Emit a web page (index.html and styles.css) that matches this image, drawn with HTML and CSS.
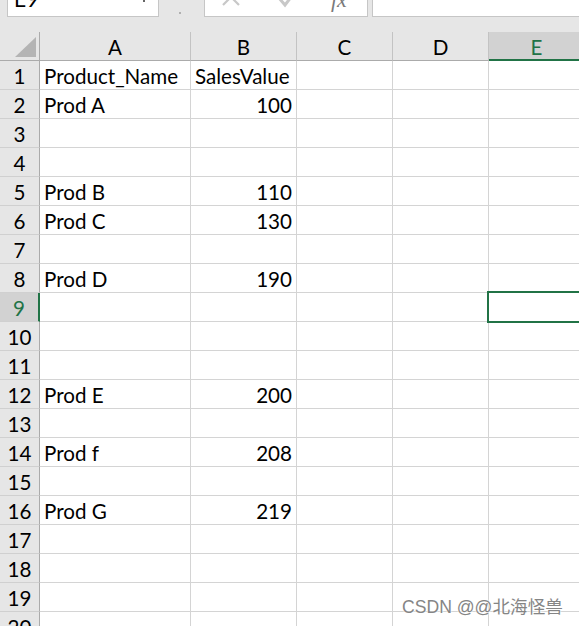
FILE: index.html
```html
<!DOCTYPE html>
<html>
<head>
<meta charset="utf-8">
<link rel="stylesheet" href="styles.css">
</head>
<body>
<div class="app">
  <div class="toolbar">
    <div class="namebox"><span class="nb-text">E9</span><span class="nb-arrow"></span></div>
    <div class="sep"><span class="dot"></span></div>
    <div class="fbuttons">
      <svg class="ico ico-x" width="20" height="20" viewBox="0 0 20 20"><path d="M2 2 L18 18 M18 2 L2 18" stroke="#c8c8c8" stroke-width="2.2" fill="none"/></svg>
      <svg class="ico ico-check" width="20" height="20" viewBox="0 0 20 20"><path d="M2 9 L8 16 L18 3" stroke="#c8c8c8" stroke-width="3" fill="none"/></svg>
      <span class="fx">fx</span>
    </div>
    <div class="finput"></div>
  </div>
  <div class="sheet">
    <div class="corner"><span class="tri"></span></div>
    <div class="ch">A</div>
    <div class="ch">B</div>
    <div class="ch">C</div>
    <div class="ch">D</div>
    <div class="ch ch-sel">E</div>

    <div class="rh">1</div><div class="c">Product_Name</div><div class="c">SalesValue</div><div class="c"></div><div class="c"></div><div class="c"></div>
    <div class="rh">2</div><div class="c">Prod A</div><div class="c num">100</div><div class="c"></div><div class="c"></div><div class="c"></div>
    <div class="rh">3</div><div class="c"></div><div class="c"></div><div class="c"></div><div class="c"></div><div class="c"></div>
    <div class="rh">4</div><div class="c"></div><div class="c"></div><div class="c"></div><div class="c"></div><div class="c"></div>
    <div class="rh">5</div><div class="c">Prod B</div><div class="c num">110</div><div class="c"></div><div class="c"></div><div class="c"></div>
    <div class="rh">6</div><div class="c">Prod C</div><div class="c num">130</div><div class="c"></div><div class="c"></div><div class="c"></div>
    <div class="rh">7</div><div class="c"></div><div class="c"></div><div class="c"></div><div class="c"></div><div class="c"></div>
    <div class="rh">8</div><div class="c">Prod D</div><div class="c num">190</div><div class="c"></div><div class="c"></div><div class="c"></div>
    <div class="rh rh-sel">9</div><div class="c"></div><div class="c"></div><div class="c"></div><div class="c"></div><div class="c active"><span class="selbox"></span></div>
    <div class="rh">10</div><div class="c"></div><div class="c"></div><div class="c"></div><div class="c"></div><div class="c"></div>
    <div class="rh">11</div><div class="c"></div><div class="c"></div><div class="c"></div><div class="c"></div><div class="c"></div>
    <div class="rh">12</div><div class="c">Prod E</div><div class="c num">200</div><div class="c"></div><div class="c"></div><div class="c"></div>
    <div class="rh">13</div><div class="c"></div><div class="c"></div><div class="c"></div><div class="c"></div><div class="c"></div>
    <div class="rh">14</div><div class="c">Prod f</div><div class="c num">208</div><div class="c"></div><div class="c"></div><div class="c"></div>
    <div class="rh">15</div><div class="c"></div><div class="c"></div><div class="c"></div><div class="c"></div><div class="c"></div>
    <div class="rh">16</div><div class="c">Prod G</div><div class="c num">219</div><div class="c"></div><div class="c"></div><div class="c"></div>
    <div class="rh">17</div><div class="c"></div><div class="c"></div><div class="c"></div><div class="c"></div><div class="c"></div>
    <div class="rh">18</div><div class="c"></div><div class="c"></div><div class="c"></div><div class="c"></div><div class="c"></div>
    <div class="rh">19</div><div class="c"></div><div class="c"></div><div class="c"></div><div class="c"></div><div class="c"></div>
    <div class="rh">20</div><div class="c"></div><div class="c"></div><div class="c"></div><div class="c"></div><div class="c"></div>
  </div>
  <div class="watermark">CSDN @@北海怪兽</div>
</div>
</body>
</html>
```
FILE: styles.css
```css
html, body {
  margin: 0;
  padding: 0;
  background: #ffffff;
  overflow: hidden;
}
.app {
  position: relative;
  width: 579px;
  height: 626px;
  overflow: hidden;
  font-family: Lato, "Open Sans", sans-serif;
  color: #000;
}
.toolbar {
  height: 32px;
  background: #e6e6e6;
  display: flex;
  align-items: flex-start;
}
.namebox {
  box-sizing: border-box;
  margin-left: 7px;
  margin-top: -10px;
  width: 152px;
  height: 27px;
  background: #fff;
  border: 1px solid #c6c6c6;
  position: relative;
  font-size: 21px;
  line-height: 20px;
}
.nb-text {
  position: absolute;
  left: 6px;
  top: -2px;
}
.nb-arrow {
  position: absolute;
  left: 135px;
  top: 9px;
  width: 2px;
  height: 2px;
  background: #666;
}
.sep {
  width: 45px;
  height: 16px;
  position: relative;
}
.dot {
  position: absolute;
  left: 20px;
  top: 12px;
  width: 2px;
  height: 2px;
  background: #b0b0b0;
}
.fbuttons {
  box-sizing: border-box;
  margin-top: -10px;
  width: 164px;
  height: 27px;
  background: #fff;
  border: 1px solid #c6c6c6;
  position: relative;
}
.ico {
  position: absolute;
}
.ico-x {
  left: 16px;
  top: -4px;
}
.ico-check {
  left: 72px;
  top: -2px;
}
.fx {
  position: absolute;
  left: 126px;
  top: -2px;
  font-family: "Liberation Serif", serif;
  font-style: italic;
  font-size: 22px;
  line-height: 22px;
  color: #7a7a7a;
}
.finput {
  box-sizing: border-box;
  margin-top: -10px;
  margin-left: 4px;
  flex: 1;
  height: 27px;
  background: #fff;
  border: 1px solid #c6c6c6;
  border-right: none;
}
.sheet {
  display: grid;
  grid-template-columns: 40px 151px 106px 96px 96px 96px;
  grid-template-rows: 29px;
  grid-auto-rows: 29px;
  font-size: 20.6px;
}
.corner, .ch, .rh, .c {
  box-sizing: border-box;
}
.corner {
  background: #e6e6e6;
  border-right: 1px solid #ababab;
  border-bottom: 1px solid #ababab;
  position: relative;
}
.tri {
  position: absolute;
  left: 15px;
  top: 5px;
  width: 0;
  height: 0;
  border-left: 21px solid transparent;
  border-bottom: 20px solid #b4b4b4;
}
.ch {
  background: #e6e6e6;
  border-right: 1px solid #c3c3c3;
  border-bottom: 1px solid #ababab;
  display: flex;
  justify-content: center;
  align-items: flex-end;
  padding-bottom: 1px;
  line-height: 24px;
}
.ch-sel {
  background: #d2d2d2;
  color: #217346;
  border-bottom: 2px solid #217346;
  padding-bottom: 0;
}
.rh {
  background: #e6e6e6;
  border-right: 1px solid #ababab;
  border-bottom: 1px solid #d0d0d0;
  display: flex;
  justify-content: center;
  align-items: flex-end;
  padding-bottom: 1px;
  line-height: 24px;
}
.rh-sel {
  background: #d2d2d2;
  color: #217346;
  border-right: 2px solid #217346;
}
.c {
  border-right: 1px solid #d4d4d4;
  border-bottom: 1px solid #d4d4d4;
  display: flex;
  align-items: flex-end;
  padding: 0 4px 1px 4px;
  line-height: 24px;
  white-space: nowrap;
}
.num {
  justify-content: flex-end;
}
.active {
  position: relative;
}
.selbox {
  position: absolute;
  left: -2px;
  top: -2px;
  right: -20px;
  bottom: -2px;
  border: 2px solid #217346;
}
.watermark {
  position: absolute;
  left: 402px;
  top: 595px;
  font-family: "Liberation Sans", "Noto Sans CJK SC", sans-serif;
  font-size: 17.6px;
  line-height: 24px;
  color: #858585;
  text-shadow: 0 0 2px #fff, 0 0 2px #fff;
  white-space: nowrap;
}
```
